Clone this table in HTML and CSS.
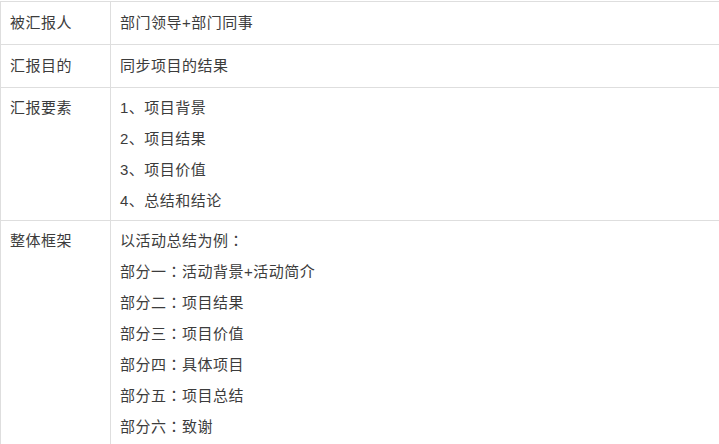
FILE: index.html
```
<!DOCTYPE html>
<html lang="zh-CN">
<head>
<meta charset="utf-8">
<link rel="stylesheet" href="styles.css">
</head>
<body>
<table class="info">
  <tr class="single">
    <td class="label">被汇报人</td>
    <td class="value"><p>部门领导+部门同事</p></td>
  </tr>
  <tr class="single">
    <td class="label">汇报目的</td>
    <td class="value"><p>同步项目的结果</p></td>
  </tr>
  <tr class="multi">
    <td class="label">汇报要素</td>
    <td class="value">
      <p>1、项目背景</p>
      <p>2、项目结果</p>
      <p>3、项目价值</p>
      <p>4、总结和结论</p>
    </td>
  </tr>
  <tr class="multi">
    <td class="label">整体框架</td>
    <td class="value">
      <p>以活动总结为例<span class="colon" lang="zh-Hant">：</span></p>
      <p>部分一<span class="colon" lang="zh-Hant">：</span>活动背景+活动简介</p>
      <p>部分二<span class="colon" lang="zh-Hant">：</span>项目结果</p>
      <p>部分三<span class="colon" lang="zh-Hant">：</span>项目价值</p>
      <p>部分四<span class="colon" lang="zh-Hant">：</span>具体项目</p>
      <p>部分五<span class="colon" lang="zh-Hant">：</span>项目总结</p>
      <p>部分六<span class="colon" lang="zh-Hant">：</span>致谢</p>
    </td>
  </tr>
</table>
</body>
</html>
```
FILE: styles.css
```
html, body {
  margin: 0;
  padding: 0;
  background: #fff;
}
body {
  font-family: Arial, "Liberation Sans", "Noto Sans CJK SC", sans-serif;
  font-size: 15px;
  letter-spacing: 0.5px;
  color: #3c3c3c;
}
.info {
  border-collapse: collapse;
  width: 740px;
  margin-top: 1px;
}
.info td {
  border: 1px solid #dedede;
  vertical-align: top;
  padding: 5px 10px 6px 9px;
  line-height: 31px;
}
.info .label {
  width: 90px;
}
.info .multi td {
  padding-top: 4px;
  padding-bottom: 4px;
}
.info p {
  margin: 0;
  height: 31px;
  white-space: nowrap;
}
.colon {
  font-family: "Noto Sans CJK TC", "Noto Sans CJK JP", sans-serif;
  line-height: 1;
}
```
